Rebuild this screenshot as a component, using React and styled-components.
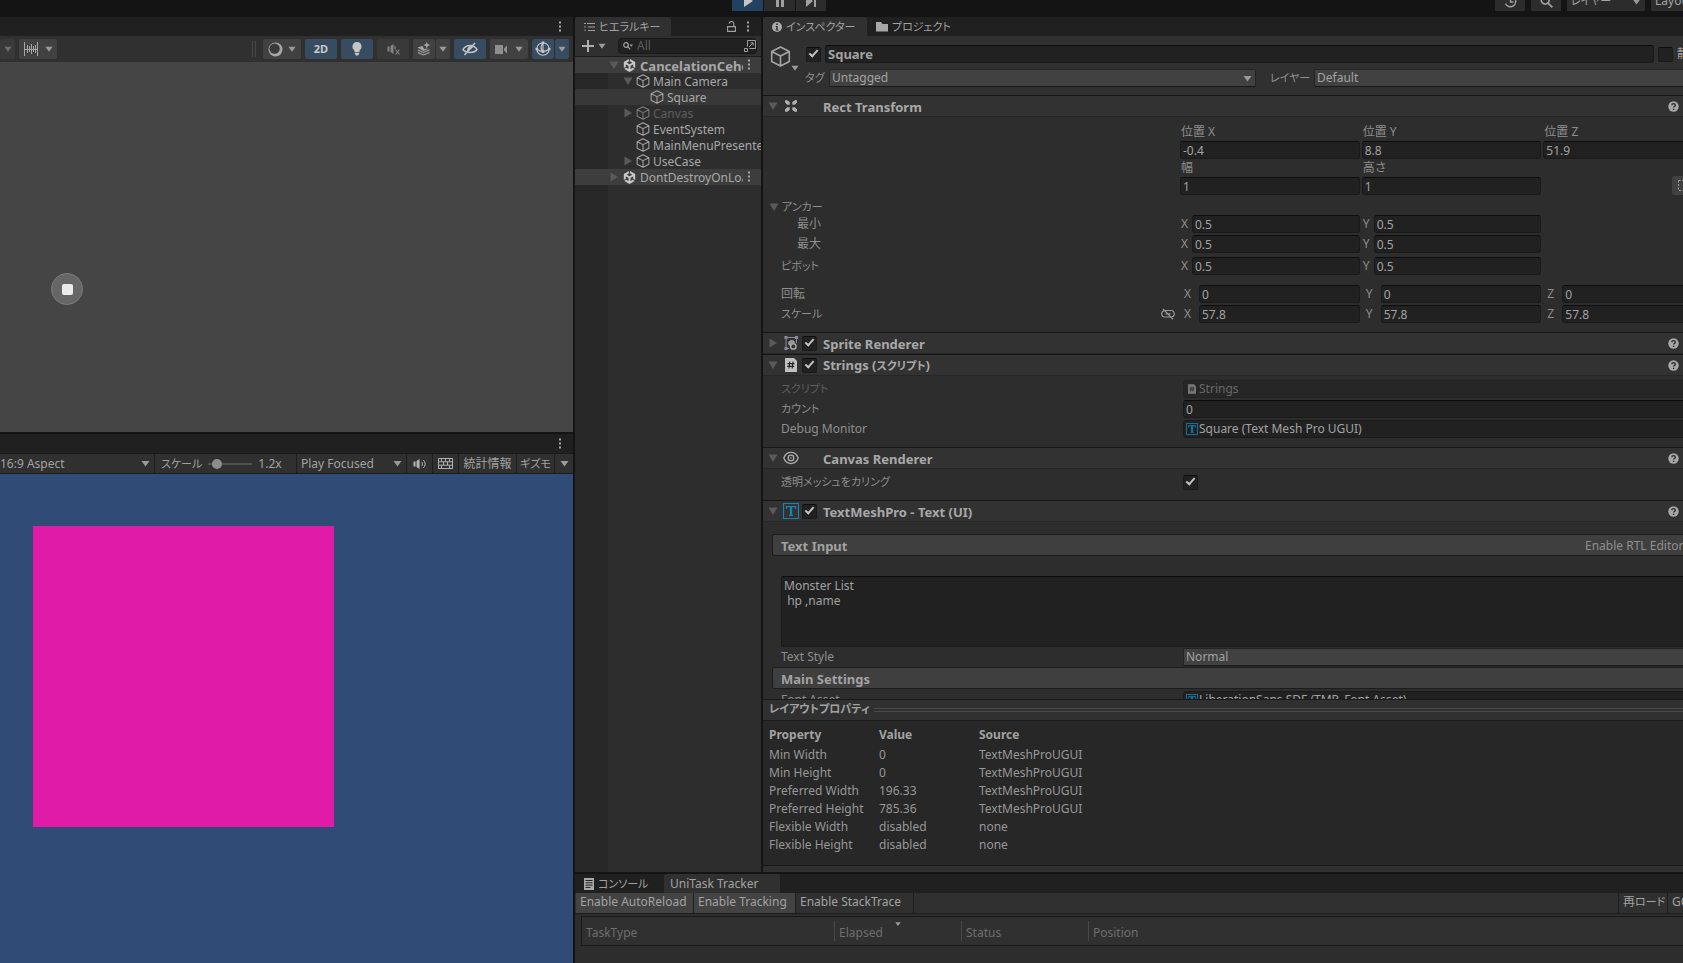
import React from "react";
import styled, { createGlobalStyle, css } from "styled-components";
import { FaUnity } from "react-icons/fa6";

const c = {
  edge: "#141414",
  tabs: "#202020",
  bar: "#303030",
  panel: "#2d2d2d",
  head: "#323232",
  field: "#212121",
  button: "#414141",
  text: "#a2a2a2",
  label: "#8e8e8e",
  dim: "#5e5e5e",
  blue: "#374b61",
  tmp: "#0f86b8",
};

const Global = createGlobalStyle`
  *, *::before, *::after { box-sizing: border-box; }
  body { margin: 0; background: ${c.edge}; overflow: hidden; }
  body, button, input, select, textarea {
    font-family: "Noto Sans", "Noto Sans CJK JP", sans-serif;
    font-size: 12px;
    line-height: 16px;
    color: ${c.text};
  }
  svg { display: block; flex: none; }
`;

/* ---------- shell ---------- */

const Shell = styled.div`
  width: calc(100vw + 45px);
  height: 100vh;
  min-height: 640px;
  display: flex;
  flex-direction: column;
`;
const TopBar = styled.header`
  height: 17px;
  flex: none;
  display: flex;
  align-items: flex-end;
  padding-bottom: 6px;
  overflow: hidden;
`;
const Spacer = styled.div`
  flex: ${(p) => p.$grow || 1};
`;
const TopGroup = styled.div`
  display: flex;
  gap: ${(p) => p.$gap}px;
`;
const TopButton = styled.button`
  width: ${(p) => p.$w || 30}px;
  height: 20px;
  padding: 0 4px;
  border: 0;
  display: flex;
  align-items: center;
  justify-content: ${(p) => (p.$spread ? "space-between" : "center")};
  background: ${(p) => (p.$on ? "#20425f" : "#2c2c2c")};
`;
const Main = styled.main`
  flex: 1;
  min-height: 0;
  display: grid;
  grid-template-columns: minmax(0, 573fr) minmax(0, 1153fr);
  gap: 2px;
`;
const LeftDock = styled.div`
  min-height: 0;
  display: grid;
  grid-template-rows: minmax(0, 415fr) minmax(0, 529fr);
  gap: 2px;
`;
const RightDock = styled.div`
  min-height: 0;
  display: flex;
  flex-direction: column;
  gap: 2px;
`;
const UpperDock = styled.div`
  flex: 1;
  min-height: 0;
  display: grid;
  grid-template-columns: minmax(0, 186fr) minmax(0, 965fr);
  gap: 2px;
`;
const Panel = styled.section`
  min-width: 0;
  min-height: 0;
  display: flex;
  flex-direction: column;
  background: ${c.panel};
  overflow: hidden;
`;
const TabBar = styled.div`
  height: 19px;
  flex: none;
  display: flex;
  align-items: stretch;
  background: ${c.tabs};
`;
const Tab = styled.button`
  border: 0;
  border-radius: 2px 2px 0 0;
  padding: 0 ${(p) => p.$pad || 9}px;
  width: ${(p) => (p.$w ? p.$w + "px" : "auto")};
  display: flex;
  align-items: center;
  gap: 4px;
  white-space: nowrap;
  background: ${(p) => (p.$on ? c.bar : "transparent")};
`;
const Kana = styled.span`
  font-size: 11px;
  font-feature-settings: "palt";
  white-space: nowrap;
`;
const TabTools = styled.div`
  margin-left: auto;
  padding-right: ${(p) => p.$pad}px;
  display: flex;
  align-items: center;
  gap: 10px;
`;
const IconButton = styled.button`
  border: 0;
  padding: 0;
  background: none;
  display: flex;
  align-items: center;
  justify-content: center;
  gap: 4px;
`;

/* ---------- icons ---------- */

const Caret = ({ s = 9, color = "#9a9a9a" }) => (
  <svg width={s} height={s} viewBox="0 0 9 9">
    <path d="M0.5 2h8L4.5 7.5z" fill={color} />
  </svg>
);
const Fold = ({ open }) => (
  <svg width="10" height="10" viewBox="0 0 10 10">
    <path d={open ? "M0.5 1.5h9L5 9z" : "M1.5 0.5v9L9 5z"} fill="#5a5a5a" />
  </svg>
);
const Kebab = () => (
  <svg width="4" height="12" viewBox="0 0 4 12" fill="#a8a8a8">
    <path d="M1 0.5h2v2H1zM1 4.5h2v2H1zM1 8.5h2v2H1z" />
  </svg>
);
const Cube = ({ s = 14, color = "#a5a5a5" }) => (
  <svg width={s} height={s} viewBox="0 0 16 16" fill="none" stroke={color} strokeWidth="1.2" strokeLinejoin="round">
    <path d="M8 0.8l6.7 3.4v7.6L8 15.2l-6.7-3.4V4.2zM1.3 4.2L8 7.6l6.7-3.4M8 7.6v7.6" />
  </svg>
);
const Hash = ({ w = 12, h = 14, color = "#c0c0c0" }) => (
  <svg width={w} height={h} viewBox="0 0 12 14">
    <path d="M0 0h9l3 3v11H0z" fill={color} />
    <path d="M4.8 3.5l-.8 7M8 3.5l-.8 7M2.5 5.6h7M2.2 8.4h7" stroke="#222" strokeWidth="1.1" fill="none" />
  </svg>
);
const TmpIcon = ({ s = 16 }) => (
  <svg width={s} height={s} viewBox="0 0 16 16" fill="none" stroke={c.tmp}>
    <path d="M0.5 0.5h15v15h-15z" strokeWidth="1.2" />
    <path d="M3.5 5.8V3.6h9v2.2M6 12.4h4" strokeWidth="1.2" />
    <path d="M8 3.6v8.8" strokeWidth="2.2" />
  </svg>
);
const Help = () => (
  <svg width="11" height="11" viewBox="0 0 11 11">
    <circle cx="5.5" cy="5.5" r="5.2" fill="#a8a8a8" />
    <path d="M3.8 4.3c0-2.2 3.5-2.2 3.5 0 0 1.2-1.7 1.2-1.7 2.3M5.6 7.7v1.3" stroke="#2b2b2b" strokeWidth="1.4" fill="none" />
  </svg>
);
const Preset = () => (
  <svg width="12" height="12" viewBox="0 0 12 12" stroke="#a8a8a8" strokeWidth="1.2" fill="none">
    <path d="M0 3h4M8 3h4M0 9h2M6 9h6" />
    <circle cx="6" cy="3" r="1.6" />
    <circle cx="4" cy="9" r="1.6" />
  </svg>
);
const Rect = () => (
  <svg width="14" height="14" viewBox="0 0 14 14" fill="#b0b0b0">
    <path d="M1 1.500L2.500 1 5.700 2.800V5.700H2.800L1 3.500zM13 1.500L11.500 1 8.300 2.800V5.700H11.200L13 3.500zM1 12.500L2.500 13 5.700 11.200V8.300H2.800L1 10.500zM13 12.500L11.500 13 8.300 11.200V8.300H11.200L13 10.500z" />
    <path d="M3.600.8L5.800 3V.8zM.8 3.800L3 6H.8zM10.400.8L8.200 3V.8zM13.200 3.800L11 6h2.200zM3.600 13.200L5.800 11v2.200zM.8 10.200L3 8H.8zM10.400 13.200L8.200 11v2.200zM13.200 10.200L11 8h2.200z" fill={c.head} />
  </svg>
);
const SpriteIcon = () => (
  <svg width="14" height="14" viewBox="0 0 14 14" fill="none" stroke="#8d8798">
    <path d="M2 1v12M2 1.5h10.5M12.5 1v6M2 12.5h3" />
    <path d="M0.5 0h3v3h-3zM11 0h3v3h-3zM0.5 11h3v3h-3z" fill="#8d8798" stroke="none" />
    <path d="M4 8c0-5 7-5 7-1l-3 0-2 3z" fill="#999" stroke="none" />
    <circle cx="9.3" cy="10.4" r="2.7" stroke="#a8a8a8" strokeWidth="1.5" />
  </svg>
);
const Eye = () => (
  <svg width="16" height="14" viewBox="0 0 16 14" fill="none" stroke="#adadad" strokeWidth="1.3">
    <path d="M0.8 7C3.6-.4 12.400-.4 15.200 7 12.400 14.400 3.600 14.400.8 7z" />
    <circle cx="8" cy="7" r="2.8" />
    <circle cx="8" cy="7" r="0.8" fill="#adadad" stroke="none" />
  </svg>
);
const Unlink = () => (
  <svg width="14" height="12" viewBox="0 0 14 12" fill="none" stroke="#989898" strokeWidth="1.2">
    <path d="M6 2.500H4a3.200 3.200 0 0 0 0 6.500h4M6 2.500h4a3.200 3.200 0 0 1 0 6.500H8M4.500 5.800h5M2 .8l10 10.500" />
  </svg>
);
const Lock = () => (
  <svg width="9" height="11" viewBox="0 0 9 11" fill="none" stroke="#a0a0a0" strokeWidth="1.1">
    <path d="M.6 5.600h7.800v4.800H.6zM6.800 5.600V2.800a2.300 2.300 0 0 0-4.600 0" />
  </svg>
);
const ListIcon = () => (
  <svg width="11" height="10" viewBox="0 0 11 10" stroke="#a0a0a0" strokeWidth="1.100" fill="none">
    <path d="M3 1.500h8M4 5h7M4 8.500h7M0 1.500h2M1 4v1.500M1 7.500V9" />
  </svg>
);
const Info = () => (
  <svg width="10" height="10" viewBox="0 0 10 10">
    <circle cx="5" cy="5" r="5" fill="#ababab" />
    <path d="M4.200 1.600h1.600v1.500H4.200zM3.700 4.100h2v3.300h.7v1H3.600v-1h.7V5h-.6z" fill="#2b2b2b" />
  </svg>
);
const Folder = () => (
  <svg width="12" height="11" viewBox="0 0 12 11" fill="#a8a8a8">
    <path d="M0 1h5l1.500 2H12v7.500H0z" />
  </svg>
);
const ConsoleIcon = () => (
  <svg width="10" height="12" viewBox="0 0 10 12">
    <path d="M0 0h10v12H0z" fill="#a8a8a8" />
    <path d="M1.500 2.500h7M1.500 4.800h7M1.500 7.100h7M1.500 9.400h5" stroke="#222" strokeWidth="1" />
  </svg>
);
const Speaker = ({ muted, color = "#b5b5b5" }) => (
  <svg width="13" height="12" viewBox="0 0 13 12">
    <path d="M0.500 3.500h2v5h-2zM3.500 3L6.500 1v10L3.500 9z" fill={color} />
    {muted ? (
      <path d="M8.500 6.500l4 5M12.500 6.500l-4 5M8 3v3" stroke={color} strokeWidth="1.200" fill="none" />
    ) : (
      <path d="M8.500 3.800c1.200 1 1.200 3.400 0 4.400M10.300 2.200c2.400 2 2.400 5.600 0 7.600" stroke={color} fill="none" />
    )}
  </svg>
);
const Keyboard = () => (
  <svg width="15" height="11" viewBox="0 0 15 11" fill="none" stroke="#b0b0b0">
    <path d="M.5.5h14v10H.5zM.5 3.800h14M.5 7.200h14M3.500 .5v3.300M7.500.5v3.300M11.500.5v3.300M5.500 3.800v3.400M9.500 3.800v3.400M3.500 7.200v3.300M11.500 7.200v3.300" />
  </svg>
);
const SnapGrid = () => (
  <svg width="14" height="14" viewBox="0 0 14 14" stroke="#a5a5a5" fill="none">
    <path d="M.5 0v14M13.500 0v14M3.500 3v8M5.500 4v6M7.500 2v10M9.500 4v6M11.500 3v8M0 7.500h14" />
  </svg>
);
const Shading = () => (
  <svg width="15" height="15" viewBox="0 0 15 15">
    <circle cx="7.500" cy="7.500" r="7" fill="#a5a5a5" />
    <circle cx="6.600" cy="6.600" r="5.200" fill="#3a3a3a" />
  </svg>
);
const Bulb = () => (
  <svg width="10" height="14" viewBox="0 0 10 14" fill="#c6c6c6">
    <path d="M5 0a4.500 4.500 0 0 1 2.600 8.200V10H2.400V8.200A4.500 4.500 0 0 1 5 0zM2.800 10.800h4.400v1L6 13.500H4l-1.200-1.700z" />
  </svg>
);
const Layers = () => (
  <svg width="14" height="14" viewBox="0 0 14 14" fill="#a8a8a8">
    <path d="M9.800 0l1 2.200L13.500 3l-2.700 1-1 2.500-1-2.500L6 3l2.800-.8zM.5 5.500L5.500 4l1.500 3 5-.5L6.500 9z" />
    <path d="M.8 8l5.700 2.500L12.500 8M.8 10.500L6.500 13l6-2.500" stroke="#a8a8a8" strokeWidth="1.100" fill="none" />
  </svg>
);
const HiddenEye = () => (
  <svg width="16" height="14" viewBox="0 0 16 14" fill="none" stroke="#c6c6c6" strokeWidth="1.500">
    <path d="M1 7.500C4 2 12 2 15 7.500 12 11.500 4 11.500 1 7.500zM2.500 13L13 1" />
    <path d="M6 8.500a3 3 0 0 1 4-3.500z" fill="#c6c6c6" />
  </svg>
);
const Camera = () => (
  <svg width="13" height="9" viewBox="0 0 13 9" fill="#8e8e8e">
    <path d="M0 0h8v9H0zM9 3.500L12 .5v8L9 5.500z" />
  </svg>
);
const Gizmo = () => (
  <svg width="16" height="16" viewBox="0 0 16 16" fill="none" stroke="#c6c6c6" strokeWidth="1.100">
    <circle cx="8" cy="8" r="6.200" />
    <path d="M8 2c-2.500 3-2.500 6 0 8.500M2 8c3 3.200 9 3.200 12 0M8 2v8.500" />
    <path d="M6.700 0.500h2.600v2.600H6.700zM6.700 9.500h2.600v2.600H6.700zM0.500 6.700h2.600v2.600H.5zM12.900 6.700h2.600v2.600h-2.600z" fill="#c6c6c6" stroke="none" />
  </svg>
);
const SearchIcon = ({ s = 10 }) => (
  <svg width={s} height={s} viewBox="0 0 10 10" fill="none" stroke="#a0a0a0" strokeWidth="1.300">
    <circle cx="4" cy="4" r="3" />
    <path d="M6.200 6.200L9.500 9.500" />
  </svg>
);
const FilterIcon = () => (
  <svg width="10" height="8" viewBox="0 0 10 8" fill="none" stroke="#a0a0a0" strokeWidth="1.200">
    <circle cx="3" cy="3" r="2.300" />
    <path d="M4.700 4.700L7.200 7.400" />
    <path d="M6.500 2.500h3.500L8.200 4.700z" fill="#a0a0a0" stroke="none" />
  </svg>
);
const PickIcon = () => (
  <svg width="12" height="12" viewBox="0 0 12 12" fill="none" stroke="#a0a0a0">
    <path d="M3.500 6.500v-6h8v8h-6M.5 8.500h3v3h-3zM5 7l4-4M6.500 2.800h2.700v2.700" />
  </svg>
);
const History = () => (
  <svg width="13" height="13" viewBox="0 0 13 13" fill="none" stroke="#a0a0a0" strokeWidth="1.400">
    <path d="M2 3.500a5.300 5.300 0 1 1-.5 5M1.500 1v3h3M6.500 3.500V7h3" />
  </svg>
);

/* ---------- scene and game views ---------- */

const SceneTools = styled.div`
  height: 26px;
  flex: none;
  display: flex;
  align-items: center;
  gap: 4px;
  padding-right: 4px;
  background: ${c.bar};
`;
const ToolButton = styled.button`
  height: 20px;
  width: ${(p) => p.$w || 32}px;
  flex: none;
  border: 0;
  border-radius: 2px;
  padding: 0;
  display: flex;
  align-items: center;
  justify-content: center;
  gap: ${(p) => p.$gap || 7}px;
  font-weight: 700;
  font-size: 11px;
  color: #cacaca;
  background: ${(p) => (p.$on ? c.blue : p.$off ? "#393939" : c.button)};
`;
const Pair = styled.div`
  display: flex;
  gap: 1px;
`;
const Handle = styled.div`
  width: 4px;
  height: 16px;
  margin: 0 3px 0 auto;
  border: solid #484848;
  border-width: 0 1px;
`;
const SceneCanvas = styled.div`
  position: relative;
  flex: 1;
  background: #454545;
`;
const Pin = styled.div`
  position: absolute;
  left: 51px;
  top: 211px;
  width: 32px;
  height: 32px;
  border-radius: 50%;
  border: 1px solid #7c7c7c;
  background: #666;
  display: grid;
  place-items: center;
  &::after {
    content: "";
    width: 11px;
    height: 11px;
    border-radius: 2px;
    background: #ebebeb;
  }
`;
const GameTools = styled.div`
  height: 21px;
  flex: none;
  display: flex;
  align-items: stretch;
  background: ${c.bar};
  border-top: 1px solid #1b1b1b;
  border-bottom: 1px solid #1b1b1b;
`;
const Cell = styled.div`
  width: ${(p) => p.$w}px;
  ${(p) => p.$grow && css`flex: ${p.$grow};`}
  min-width: 0;
  padding-left: ${(p) => p.$pad || 0}px;
  display: flex;
  align-items: center;
  justify-content: ${(p) => (p.$pad ? "flex-start" : "center")};
  gap: 6px;
  border-right: 1px solid #1e1e1e;
  white-space: nowrap;
  &:last-child { border-right: 0; }
`;
const Range = styled.input`
  appearance: none;
  width: 44px;
  height: 12px;
  margin: 0;
  background: linear-gradient(#505050, #505050) center / 100% 2px no-repeat;
  &::-webkit-slider-thumb {
    appearance: none;
    width: 10px;
    height: 10px;
    border-radius: 50%;
    background: #8c8c8c;
  }
`;
const GameCanvas = styled.div`
  position: relative;
  flex: 1;
  background: #304c76;
`;
const PinkQuad = styled.div`
  position: absolute;
  left: 33px;
  top: 52px;
  width: 301px;
  height: 301px;
  background: #e01ba8;
`;

/* ---------- form controls ---------- */

const SelectWrap = styled.span`
  position: relative;
  flex: ${(p) => p.$grow || 1};
  min-width: 0;
  display: flex;
  align-items: center;
  svg { position: absolute; right: 4px; pointer-events: none; }
`;
const SelectBox = styled.select`
  appearance: none;
  width: 100%;
  height: 18px;
  margin: 0;
  padding: 0 ${(p) => (p.$plain ? 0 : 2)}px;
  border-radius: 2px;
  outline: 0;
  border: ${(p) => (p.$plain ? 0 : "1px solid #242424")};
  border-bottom-color: #191919;
  background: ${(p) => (p.$plain ? "transparent" : c.button)};
  line-height: 16px;
`;
const Select = ({ label, value, grow, plain }) => (
  <SelectWrap $grow={grow}>
    <SelectBox aria-label={label} $plain={plain}>
      <option>{value}</option>
    </SelectBox>
    <Caret />
  </SelectWrap>
);
const Check = styled.input`
  appearance: none;
  width: 15px;
  height: 15px;
  flex: none;
  margin: 0;
  display: grid;
  place-items: center;
  border: 1px solid #1a1a1a;
  border-top-color: #0d0d0d;
  border-radius: 2px;
  background: ${c.field};
  &:checked::after {
    content: "";
    width: 9px;
    height: 5px;
    margin-top: -3px;
    border: solid #c4c4c4;
    border-width: 0 0 2px 2px;
    transform: rotate(-48deg);
  }
`;
const fieldStyle = css`
  min-width: 0;
  width: 100%;
  border: 1px solid #1a1a1a;
  border-top-color: #0d0d0d;
  border-radius: 3px;
  background: ${c.field};
  outline: 0;
`;
const Field = styled.input`
  ${fieldStyle}
  flex: 1;
  height: 18px;
  padding: 0 2px;
  font-weight: ${(p) => (p.$bold ? 700 : 400)};
  font-size: ${(p) => (p.$bold ? 13 : 12)}px;
`;
const ObjectField = styled.button`
  ${fieldStyle}
  height: 18px;
  padding: 0 2px;
  display: flex;
  align-items: center;
  gap: 1px;
  border-top-color: #1a1a1a;
  opacity: ${(p) => (p.$dim ? 0.5 : 1)};
  white-space: nowrap;
`;
const ObjectMark = styled.span`
  width: 12px;
  display: flex;
  justify-content: center;
`;
const TextArea = styled.textarea`
  ${fieldStyle}
  display: block;
  height: 71px;
  padding: 1px 2px;
  line-height: 15px;
  resize: none;
`;

/* ---------- hierarchy ---------- */

const HierTools = styled.div`
  height: 21px;
  flex: none;
  display: flex;
  align-items: center;
  gap: 4px;
  padding: 0 4px 0 7px;
  background: ${c.bar};
  border-bottom: 1px solid #1c1c1c;
`;
const SearchBox = styled.label`
  flex: 1;
  min-width: 0;
  height: 16px;
  margin-left: 8px;
  padding-left: 4px;
  display: flex;
  align-items: center;
  gap: 4px;
  border: 1px solid #191919;
  border-radius: 4px;
  background: ${c.field};
  input {
    flex: 1;
    min-width: 0;
    height: 14px;
    padding: 0;
    border: 0;
    outline: 0;
    background: none;
  }
  input::placeholder { color: #5c5c5c; }
`;
const Tree = styled.ul`
  flex: 1;
  margin: 0;
  padding: 0;
  list-style: none;
  background: linear-gradient(90deg, #282828 33px, ${c.panel} 33px);
`;
const TreeRow = styled.li`
  height: 16px;
  padding-left: ${(p) => 34 + p.$depth * 14}px;
  padding-right: ${(p) => (p.$scene ? 10 : 0)}px;
  display: flex;
  align-items: center;
  gap: ${(p) => (p.$scene ? 4 : 3)}px;
  font-weight: ${(p) => (p.$bold ? 700 : 400)};
  font-size: ${(p) => (p.$bold ? 13 : 12)}px;
  color: ${(p) => (p.$dim ? c.dim : "#a8a8a8")};
  background: ${(p) => (p.$scene ? "#3d3d3d" : p.$selected ? "#383838" : "transparent")};
`;
const TreeName = styled.span`
  flex: 1;
  min-width: 0;
  padding-top: 2px;
  overflow: hidden;
  white-space: nowrap;
`;
const FoldSlot = styled.button`
  width: 10px;
  height: 10px;
  flex: none;
  padding: 0;
  border: 0;
  background: none;
`;

const tree = [
  { name: "CancelationCehck", depth: 0, fold: true, open: true, scene: true, bold: true },
  { name: "Main Camera", depth: 1, fold: true, open: true },
  { name: "Square", depth: 2, selected: true },
  { name: "Canvas", depth: 1, fold: true, dim: true },
  { name: "EventSystem", depth: 1 },
  { name: "MainMenuPresenter", depth: 1 },
  { name: "UseCase", depth: 1, fold: true },
  { name: "DontDestroyOnLoad", depth: 0, fold: true, scene: true },
];

/* ---------- inspector ---------- */

const ObjectHead = styled.div`
  flex: none;
  display: flex;
  padding: 9px 0 8px;
  background: ${c.bar};
`;
const ObjectIcon = styled.button`
  width: 40px;
  flex: none;
  border: 0;
  padding: 1px 0 0 7px;
  background: none;
  display: flex;
  align-items: flex-start;
  svg + svg { margin-top: 18px; }
`;
const ObjectRows = styled.div`
  flex: 1;
  min-width: 0;
  display: flex;
  flex-direction: column;
  gap: 6px;
`;
const NameRow = styled.div`
  display: flex;
  align-items: center;
  gap: 4px;
  padding-left: 3px;
`;
const StaticLabel = styled.label`
  width: 51px;
  flex: none;
`;
const TagRow = styled.div`
  display: flex;
  align-items: center;
  padding-right: 4px;
`;
const TagLabel = styled(Kana)`
  width: ${(p) => p.$w}px;
  padding-left: ${(p) => p.$pad}px;
  flex: none;
  color: ${c.label};
`;
const Components = styled.div`
  flex: 1;
  min-height: 0;
  overflow: hidden;
`;
const CompHead = styled.div`
  height: 22px;
  display: flex;
  align-items: center;
  padding: 0 13px 0 5px;
  border-top: 1px solid #161616;
  border-bottom: 1px solid #262626;
  background: ${c.head};
`;
const CompIcon = styled.span`
  width: 18px;
  margin: 0 2px 0 4px;
  display: flex;
  justify-content: center;
`;
const CompToggle = styled.span`
  width: 15px;
  margin-right: 6px;
`;
const CompTitle = styled.h2`
  flex: 1;
  margin: 0;
  padding-top: 1px;
  font-size: 13px;
  line-height: 16px;
  font-weight: 700;
  color: #a8a8a8;
`;
const CompTools = styled.div`
  display: flex;
  align-items: center;
  gap: 10px;
`;
const CompBody = styled.div`
  padding: ${(p) => p.$top}px 5px 9px 0;
  display: flex;
  flex-direction: column;
  gap: 2px;
`;
const Row = styled.div`
  display: grid;
  grid-template-columns: minmax(0, ${(p) => (p.$wide ? "420fr" : "417fr")}) minmax(0, ${(p) => (p.$wide ? "540fr" : "543fr")});
  min-height: 18px;
  margin-top: ${(p) => p.$before || 0}px;
  align-items: center;
`;
const RowLabel = styled.span`
  padding-left: ${(p) => p.$indent || 18}px;
  padding-right: 5px;
  display: flex;
  align-items: center;
  justify-content: space-between;
  color: ${(p) => (p.$dim ? c.dim : c.label)};
`;
const FoldLabel = styled(IconButton)`
  justify-content: flex-start;
  gap: 3px;
  padding: 1px 0 0 6px;
  color: ${c.label};
`;
const Axes = styled.div`
  display: grid;
  grid-template-columns: repeat(3, minmax(0, 1fr));
  gap: 0 2px;
`;
const Stacked = styled.label`
  display: flex;
  flex-direction: column;
  color: ${c.label};
  span { height: 18px; padding-left: 1px; line-height: 18px; }
  input { flex: none; }
`;
const Inline = styled.label`
  display: flex;
  align-items: center;
  color: ${c.label};
  span { width: ${(p) => (p.$wide ? 19 : 12)}px; padding-left: ${(p) => (p.$wide ? 4 : 1)}px; flex: none; }
`;
const RectModes = styled.div`
  display: flex;
  justify-content: flex-end;
  align-items: flex-end;
  gap: 1px;
`;
const ModeButton = styled.button`
  width: 25px;
  height: 19px;
  border: 0;
  border-radius: 2px;
  padding: 0 6px;
  background: ${c.button};
`;
const SubBar = styled.div`
  height: 22px;
  margin-left: 9px;
  padding: 0 40px 0 8px;
  display: flex;
  align-items: center;
  justify-content: space-between;
  border: 1px solid #1c1c1c;
  border-radius: 2px;
  background: #3f3f3f;
  h3 { margin: 3px 0 0; font-size: 13px; line-height: 17px; }
`;
const RtlLabel = styled.label`
  width: 97px;
  padding-top: 1px;
  white-space: nowrap;
  color: ${c.label};
`;
const AreaWrap = styled.div`
  margin: 20px 5px 1px 18px;
`;
const TmpRow = styled.div`
  padding: ${(p) => p.$top || 0}px 5px 1px 0;
`;

const LayoutProps = styled.div`
  flex: none;
  border-bottom: 6px solid ${c.bar};
  background: #272727;
`;
const LayoutHead = styled.div`
  height: 22px;
  padding: 0 0 2px 6px;
  display: flex;
  align-items: center;
  gap: 4px;
  font-weight: 700;
  border: solid #191919;
  border-width: 1px 0;
  background: ${c.bar};
  &::after {
    content: "";
    flex: 1;
    height: 4px;
    margin-top: 2px;
    border: solid #4a4a4a;
    border-width: 1px 0;
  }
`;
const PropTable = styled.table`
  border-collapse: collapse;
  margin: 3px 0 11px 6px;
  th, td { padding: 0; height: 18px; text-align: left; }
  th { height: 22px; }
  td { color: #979797; }
  th:nth-child(1) { width: 110px; }
  th:nth-child(2) { width: 100px; }
`;
const LayoutEnd = styled.div`
  height: 1px;
  background: #161616;
`;

const Component = ({ title, icon, open, toggle }) => (
  <CompHead>
    <FoldSlot aria-label={title}><Fold open={open} /></FoldSlot>
    <CompIcon>{icon}</CompIcon>
    <CompToggle>{toggle && <Check type="checkbox" aria-label={"Enable " + title} defaultChecked />}</CompToggle>
    <CompTitle>{title === "Strings" ? <>Strings (<Kana>スクリプト</Kana>)</> : title}</CompTitle>
    <CompTools>
      <IconButton aria-label="Help"><Help /></IconButton>
      <IconButton aria-label="Presets"><Preset /></IconButton>
      <IconButton aria-label="Menu"><Kebab /></IconButton>
    </CompTools>
  </CompHead>
);
const StackedField = ({ label, value }) => (
  <Stacked><span>{label}</span><Field defaultValue={value} /></Stacked>
);
const AxisRow = ({ label, values, indent, wide, before, link }) => (
  <Row $before={before}>
    <RowLabel $indent={indent}>{label}{link && <Unlink />}</RowLabel>
    <Axes>
      {values.map((v, i) => (
        <Inline key={i} $wide={wide}><span>{"XYZ"[i]}</span><Field defaultValue={v} /></Inline>
      ))}
    </Axes>
  </Row>
);

const layoutRows = [
  ["Min Width", "0", "TextMeshProUGUI"],
  ["Min Height", "0", "TextMeshProUGUI"],
  ["Preferred Width", "196.33", "TextMeshProUGUI"],
  ["Preferred Height", "785.36", "TextMeshProUGUI"],
  ["Flexible Width", "disabled", "none"],
  ["Flexible Height", "disabled", "none"],
];

/* ---------- tracker ---------- */

const Tracker = styled(Panel)`
  height: 89px;
  flex: none;
`;
const TrackTools = styled.div`
  height: 21px;
  flex: none;
  display: flex;
  padding-left: 1px;
  background: ${c.bar};
  border-bottom: 1px solid #1b1b1b;
`;
const TrackButton = styled.button`
  width: ${(p) => p.$w}px;
  border: 0;
  border-right: 1px solid #1e1e1e;
  padding: 0 0 2px 4px;
  text-align: left;
  white-space: nowrap;
  background: ${(p) => (p.$on ? "#434343" : "transparent")};
`;
const TrackRight = styled.div`
  margin-left: auto;
  display: flex;
  border-left: 1px solid #1e1e1e;
`;
const TrackTableWrap = styled.div`
  margin: 2px 0 0 6px;
  border: 1px solid #191919;
  border-right: 0;
  background: ${c.bar};
`;
const TrackTable = styled.table`
  width: 100%;
  table-layout: fixed;
  border-collapse: collapse;
  th { padding: 4px 0; font-weight: 400; text-align: left; color: #6e6e6e; }
  th:nth-child(1) { width: 252px; }
  th:nth-child(2), th:nth-child(3) { width: 127px; }
`;
const HeadCell = styled.div`
  position: relative;
  height: 20px;
  padding: 4px 0 0 ${(p) => (p.$first ? 3 : 4)}px;
  border-left: 1px solid ${(p) => (p.$first ? "transparent" : "#484848")};
`;
const SortMark = styled.span`
  position: absolute;
  left: 60px;
  top: 0;
`;

export default function App() {
  return (
    <>
      <Global />
      <Shell>
        <TopBar>
          <Spacer $grow={732} />
          <TopGroup $gap={1}>
            <TopButton $on $w={31} aria-label="Play"><svg width="12" height="12" viewBox="0 0 12 12"><path d="M2 0l9 6-9 6z" fill="#c6c6c6" /></svg></TopButton>
            <TopButton $w={31} aria-label="Pause"><svg width="10" height="12" viewBox="0 0 10 12"><path d="M1 0h3v12H1zM6 0h3v12H6z" fill="#a0a0a0" /></svg></TopButton>
            <TopButton $w={30} aria-label="Step"><svg width="12" height="12" viewBox="0 0 12 12"><path d="M1 0l7 6-7 6zM9 0h2v12H9z" fill="#a0a0a0" /></svg></TopButton>
          </TopGroup>
          <Spacer $grow={669} />
          <TopGroup $gap={6}>
            <TopButton aria-label="History"><History /></TopButton>
            <TopButton aria-label="Search"><SearchIcon s={13} /></TopButton>
            <TopButton $w={78} $spread><Kana>レイヤー</Kana><Caret /></TopButton>
            <TopButton $w={77} $spread>Layout<Caret /></TopButton>
          </TopGroup>
        </TopBar>
        <Main>
          <LeftDock>
            <Panel>
              <TabBar><TabTools $pad={11}><IconButton aria-label="Menu"><Kebab /></IconButton></TabTools></TabBar>
              <SceneTools>
                <ToolButton $w={15} $off aria-label="Options"><Caret s={8} color="#6e6e6e" /></ToolButton>
                <ToolButton $w={38} aria-label="Snap"><SnapGrid /><Caret s={8} /></ToolButton>
                <Handle />
                <ToolButton $w={38} $gap={5} aria-label="Shading"><Shading /><Caret s={8} /></ToolButton>
                <ToolButton $on>2D</ToolButton>
                <ToolButton $on aria-label="Lighting"><Bulb /></ToolButton>
                <ToolButton $off aria-label="Audio"><Speaker muted color="#858585" /></ToolButton>
                <Pair>
                  <ToolButton $w={22} aria-label="Effects"><Layers /></ToolButton>
                  <ToolButton $w={14} aria-label="Effect options"><Caret s={8} /></ToolButton>
                </Pair>
                <ToolButton $on aria-label="Visibility"><HiddenEye /></ToolButton>
                <ToolButton $w={38} aria-label="Camera"><Camera /><Caret s={8} /></ToolButton>
                <Pair>
                  <ToolButton $on $w={22} aria-label="Gizmos"><Gizmo /></ToolButton>
                  <ToolButton $on $w={14} aria-label="Gizmo options"><Caret s={8} /></ToolButton>
                </Pair>
              </SceneTools>
              <SceneCanvas><Pin /></SceneCanvas>
            </Panel>
            <Panel>
              <TabBar><TabTools $pad={11}><IconButton aria-label="Menu"><Kebab /></IconButton></TabTools></TabBar>
              <GameTools>
                <Cell $grow={156}><Select label="Aspect" value="16:9 Aspect" plain /></Cell>
                <Cell $w={142} $pad={6} as="label"><Kana>スケール</Kana><Range type="range" min="0" max="10" defaultValue="1.2" step="0.1" /><span>1.2x</span></Cell>
                <Cell $w={110} $pad={4}><Select label="Play mode" value="Play Focused" plain /></Cell>
                <Cell $w={26}><IconButton aria-label="Mute"><Speaker /></IconButton></Cell>
                <Cell $w={26}><IconButton aria-label="Shortcuts"><Keyboard /></IconButton></Cell>
                <Cell $w={58}><IconButton>統計情報</IconButton></Cell>
                <Cell $w={38}><IconButton><Kana>ギズモ</Kana></IconButton></Cell>
                <Cell $w={18}><IconButton aria-label="Gizmo list"><Caret /></IconButton></Cell>
              </GameTools>
              <GameCanvas><PinkQuad /></GameCanvas>
            </Panel>
          </LeftDock>
          <RightDock>
            <UpperDock>
              <Panel>
                <TabBar>
                  <Tab $on $w={96}><ListIcon /><Kana>ヒエラルキー</Kana></Tab>
                  <TabTools $pad={11}>
                    <IconButton aria-label="Lock"><Lock /></IconButton>
                    <IconButton aria-label="Menu"><Kebab /></IconButton>
                  </TabTools>
                </TabBar>
                <HierTools>
                  <IconButton aria-label="Create">
                    <svg width="12" height="12" viewBox="0 0 12 12" stroke="#b0b0b0" strokeWidth="2"><path d="M6 0v12M0 6h12" /></svg>
                    <Caret s={8} />
                  </IconButton>
                  <SearchBox><FilterIcon /><input placeholder="All" aria-label="Search hierarchy" /><PickIcon /></SearchBox>
                </HierTools>
                <Tree>
                  {tree.map((n) => (
                    <TreeRow key={n.name} $depth={n.depth} $scene={n.scene} $selected={n.selected} $bold={n.bold} $dim={n.dim}>
                      {n.fold ? <FoldSlot aria-label={"Fold " + n.name}><Fold open={n.open} /></FoldSlot> : <FoldSlot as="span" />}
                      {n.scene ? <FaUnity size={13} color="#c8c8c8" /> : <Cube color={n.dim ? "#7a7a7a" : undefined} />}
                      <TreeName>{n.name}</TreeName>
                      {n.scene && <Kebab />}
                    </TreeRow>
                  ))}
                </Tree>
              </Panel>
              <Panel>
                <TabBar>
                  <Tab $on $w={104}><Info /><Kana>インスペクター</Kana></Tab>
                  <Tab><Folder /><Kana>プロジェクト</Kana></Tab>
                </TabBar>
                <ObjectHead>
                  <ObjectIcon aria-label="Object icon"><Cube s={21} /><Caret s={8} /></ObjectIcon>
                  <ObjectRows>
                    <NameRow>
                      <Check type="checkbox" aria-label="Active" defaultChecked />
                      <Field $bold aria-label="Name" defaultValue="Square" />
                      <Check type="checkbox" id="static" />
                      <StaticLabel htmlFor="static">静的</StaticLabel>
                    </NameRow>
                    <TagRow>
                      <TagLabel $w={26} $pad={2}>タグ</TagLabel>
                      <Select label="Tag" value="Untagged" grow={427} />
                      <TagLabel $w={58} $pad={14}>レイヤー</TagLabel>
                      <Select label="Layer" value="Default" grow={410} />
                    </TagRow>
                  </ObjectRows>
                </ObjectHead>
                <Components>
                  <Component title="Rect Transform" icon={<Rect />} open />
                  <CompBody $top={6}>
                    <Row>
                      <span />
                      <Axes>
                        <StackedField label="位置 X" value="-0.4" />
                        <StackedField label="位置 Y" value="8.8" />
                        <StackedField label="位置 Z" value="51.9" />
                        <StackedField label="幅" value="1" />
                        <StackedField label="高さ" value="1" />
                        <RectModes>
                          <ModeButton aria-label="Blueprint mode">
                            <svg width="13" height="11" viewBox="0 0 13 11" fill="none" stroke="#a0a0a0" strokeDasharray="2 1.500"><path d="M.5.5h12v10H.5z" /></svg>
                          </ModeButton>
                          <ModeButton>R</ModeButton>
                        </RectModes>
                      </Axes>
                    </Row>
                    <div>
                      <Row><FoldLabel><Fold open /><Kana>アンカー</Kana></FoldLabel></Row>
                      <AxisRow label="最小" indent={34} values={["0.5", "0.5"]} />
                    </div>
                    <AxisRow label="最大" indent={34} values={["0.5", "0.5"]} />
                    <AxisRow label={<Kana>ピボット</Kana>} values={["0.5", "0.5"]} before={2} />
                    <AxisRow label="回転" values={["0", "0", "0"]} wide before={8} />
                    <AxisRow label={<Kana>スケール</Kana>} values={["57.8", "57.8", "57.8"]} wide link />
                  </CompBody>
                  <Component title="Sprite Renderer" icon={<SpriteIcon />} toggle />
                  <Component title="Strings" icon={<Hash />} open toggle />
                  <CompBody $top={4}>
                    <Row $wide>
                      <RowLabel $dim><Kana>スクリプト</Kana></RowLabel>
                      <ObjectField $dim><ObjectMark><Hash w={8} h={10} /></ObjectMark>Strings</ObjectField>
                    </Row>
                    <Row $wide>
                      <RowLabel><Kana>カウント</Kana></RowLabel>
                      <Field aria-label="カウント" defaultValue="0" />
                    </Row>
                    <Row $wide>
                      <RowLabel>Debug Monitor</RowLabel>
                      <ObjectField><TmpIcon s={12} />Square (Text Mesh Pro UGUI)</ObjectField>
                    </Row>
                  </CompBody>
                  <Component title="Canvas Renderer" icon={<Eye />} open />
                  <CompBody $top={4}>
                    <Row $wide>
                      <RowLabel><Kana>透明メッシュをカリング</Kana></RowLabel>
                      <Check type="checkbox" aria-label="透明メッシュをカリング" defaultChecked />
                    </Row>
                  </CompBody>
                  <Component title="TextMeshPro - Text (UI)" icon={<TmpIcon />} open toggle />
                  <TmpRow $top={12}>
                    <SubBar>
                      <h3>Text Input</h3>
                      <RtlLabel>Enable RTL Editor</RtlLabel>
                    </SubBar>
                    <AreaWrap><TextArea aria-label="Text Input" defaultValue={"Monster List\n hp ,name"} /></AreaWrap>
                    <Row $wide>
                      <RowLabel>Text Style</RowLabel>
                      <Select label="Text Style" value="Normal" />
                    </Row>
                  </TmpRow>
                  <SubBar><h3>Main Settings</h3></SubBar>
                  <TmpRow $top={2}>
                    <Row $wide>
                      <RowLabel>Font Asset</RowLabel>
                      <ObjectField><TmpIcon s={12} />LiberationSans SDF (TMP_Font Asset)</ObjectField>
                    </Row>
                  </TmpRow>
                </Components>
                <LayoutProps>
                  <LayoutHead><Kana>レイアウトプロパティ</Kana></LayoutHead>
                  <PropTable>
                    <thead><tr><th>Property</th><th>Value</th><th>Source</th></tr></thead>
                    <tbody>
                      {layoutRows.map((r) => (
                        <tr key={r[0]}>{r.map((v, i) => <td key={i}>{v}</td>)}</tr>
                      ))}
                    </tbody>
                  </PropTable>
                  <LayoutEnd />
                </LayoutProps>
              </Panel>
            </UpperDock>
            <Tracker>
              <TabBar>
                <Tab $w={89}><ConsoleIcon /><Kana>コンソール</Kana></Tab>
                <Tab $on $w={116} $pad={6}>UniTask Tracker</Tab>
              </TabBar>
              <TrackTools>
                <TrackButton $on $w={118}>Enable AutoReload</TrackButton>
                <TrackButton $on $w={102}>Enable Tracking</TrackButton>
                <TrackButton $w={118}>Enable StackTrace</TrackButton>
                <TrackRight>
                  <TrackButton $w={49}>再<Kana>ロード</Kana></TrackButton>
                  <TrackButton $w={60}>GC.Collect</TrackButton>
                </TrackRight>
              </TrackTools>
              <TrackTableWrap>
                <TrackTable>
                  <thead>
                    <tr>
                      <th><HeadCell $first>TaskType</HeadCell></th>
                      <th><HeadCell>Elapsed<SortMark><Caret s={6} /></SortMark></HeadCell></th>
                      <th><HeadCell>Status</HeadCell></th>
                      <th><HeadCell>Position</HeadCell></th>
                    </tr>
                  </thead>
                </TrackTable>
              </TrackTableWrap>
            </Tracker>
          </RightDock>
        </Main>
      </Shell>
    </>
  );
}
